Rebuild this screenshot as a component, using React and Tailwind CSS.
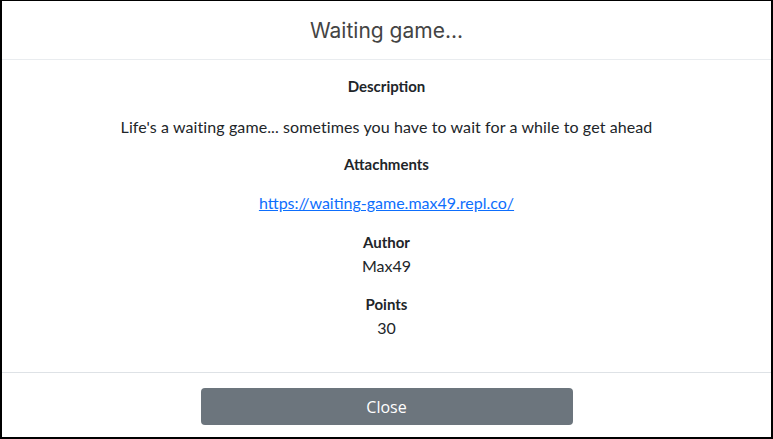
const body = { fontFamily: 'Lato, "Open Sans", sans-serif' };

const Section = ({ label, children, className = '' }) => (
  <div className={className}>
    <div className="font-bold text-[15px] leading-6 text-[#212529]">{label}</div>
    {children}
  </div>
);

export default function App() {
  return (
    <div
      className="w-[773px] h-[439px] flex flex-col bg-white border-t border-x-2 border-b-2 border-black"
      style={body}
    >
      <div className="h-[59px] shrink-0 border-b border-[#e9ecef] flex items-center justify-center">
        <h1
          className="text-[21px] font-normal text-[#444] pt-[1px]"
          style={{ fontFamily: 'Inter, "Noto Sans", sans-serif' }}
        >
          Waiting game...
        </h1>
      </div>

      <div className="flex-1 flex flex-col items-center text-center pt-[14px] text-[16px] leading-6 text-[#212529]">
        <Section label="Description">
          <p className="mt-[17px] tracking-[0.1px]">
            Life's a waiting game... sometimes you have to wait for a while to get ahead
          </p>
        </Section>
        <Section label="Attachments" className="mt-[13px]">
          <p className="mt-[15px]">
            <a href="#" className="text-[#0d6efd] underline">
              https://waiting-game.max49.repl.co/
            </a>
          </p>
        </Section>
        <Section label="Author" className="mt-[15px]">
          <p>Max49</p>
        </Section>
        <Section label="Points" className="mt-[14px]">
          <p>30</p>
        </Section>
      </div>

      <div className="h-[65px] shrink-0 border-t border-[#dee2e6] flex justify-center pt-[15px]">
        <button
          className="w-[372px] h-[37px] rounded bg-[#6c757d] text-white text-[16px] font-medium"
          style={{ fontFamily: '"Open Sans", sans-serif' }}
        >
          Close
        </button>
      </div>
    </div>
  );
}
